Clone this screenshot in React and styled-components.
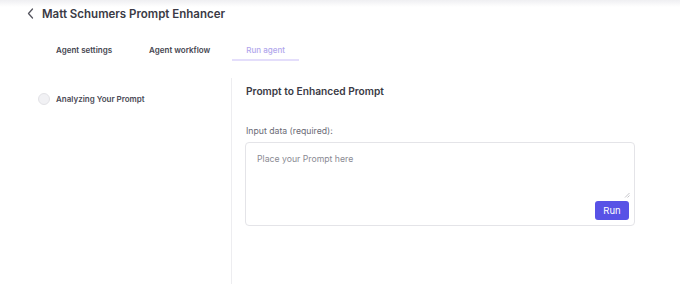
import React from 'react';
import styled, { createGlobalStyle } from 'styled-components';

const GlobalStyle = createGlobalStyle`
   html, body {
      margin: 0;
      padding: 0;
      background: #fff;
   }
   body {
      font-family: Inter, "Noto Sans", sans-serif;
      color: #3a3a45;
   }
`;

const Page = styled.div`
   position: relative;
   width: 680px;
   height: 284px;
   overflow: hidden;
   display: flex;
   flex-direction: column;
   background: #fff;

   &::before {
      content: '';
      position: absolute;
      top: 0;
      left: 0;
      right: 0;
      height: 7px;
      background: linear-gradient(#efeff2, rgba(255, 255, 255, 0));
   }
`;

const Header = styled.div`
   display: flex;
   align-items: center;
   gap: 8px;
   padding: 4px 0 0 27px;
   height: 19px;
`;

const BackButton = styled.button`
   border: none;
   background: none;
   padding: 0;
   display: flex;
   color: #55555f;
   cursor: pointer;
`;

const Title = styled.h1`
   margin: 0;
   font-size: 11.5px;
   font-weight: 600;
   color: #3a3a45;
`;

const Tabs = styled.div`
   display: flex;
   padding: 17px 0 0 42px;
`;

const Tab = styled.div`
   padding: 5px 14px 0;
   height: 14px;
   line-height: 10px;
   font-size: 8px;
   white-space: nowrap;
   margin-right: ${(p) => p.gap || 0}px;
   color: ${(p) => (p.active ? '#b1a6ec' : '#45454f')};
   font-weight: ${(p) => (p.active ? 500 : 600)};
   border-bottom: 2px solid ${(p) => (p.active ? '#e4defb' : 'transparent')};
`;

const Body = styled.div`
   flex: 1;
   display: flex;
   margin-top: 17px;
`;

const Sidebar = styled.div`
   width: 232px;
   border-right: 1px solid #ededf0;
   box-sizing: border-box;
   padding: 15px 0 0 38px;
`;

const Step = styled.div`
   display: flex;
   align-items: center;
   gap: 6px;
`;

const StepDot = styled.span`
   width: 10px;
   height: 10px;
   border-radius: 50%;
   background: #f1f1f4;
   border: 1px solid #e2e2e6;
`;

const StepLabel = styled.span`
   font-size: 8px;
   font-weight: 600;
   color: #4a4a55;
`;

const Main = styled.div`
   flex: 1;
   padding: 6px 45px 0 13px;
`;

const SectionTitle = styled.h2`
   margin: 0 0 0 1px;
   font-size: 10.2px;
   font-weight: 600;
   color: #3a3a45;
   height: 14px;
   line-height: 14px;
`;

const FieldLabel = styled.div`
   margin: 27px 0 0 1px;
   font-size: 8.7px;
   color: #6a6a75;
   line-height: 12px;
`;

const InputBox = styled.div`
   margin-top: 5px;
   height: 84px;
   border: 1px solid #e4e4e8;
   border-radius: 4px;
   box-sizing: border-box;
   display: flex;
   flex-direction: column;
   padding: 10px 5px 5px 11px;
   position: relative;
`;

const PromptArea = styled.textarea`
   flex: 1;
   border: none;
   outline: none;
   resize: none;
   padding: 0;
   font-family: inherit;
   font-size: 8.7px;
   color: #3a3a45;
   line-height: 12px;
   background: transparent;

   &::placeholder {
      color: #8a8a93;
   }
`;

const ResizeGrip = styled.svg`
   position: absolute;
   right: 4px;
   bottom: 27px;
`;

const Actions = styled.div`
   display: flex;
   justify-content: flex-end;
`;

const RunButton = styled.button`
   background: #5852e6;
   color: #fff;
   border: none;
   border-radius: 3px;
   font-family: inherit;
   font-size: 9.5px;
   width: 34px;
   height: 19px;
   padding: 0;
   cursor: pointer;
`;

const App = () => {
   return (
      <>
         <GlobalStyle />
         <Page>
            <Header>
               <BackButton aria-label="Back">
                  <svg width="7" height="11" viewBox="0 0 7 11" fill="none">
                     <path
                        d="M5.5 1L1.5 5.5L5.5 10"
                        stroke="currentColor"
                        strokeWidth="1.3"
                        strokeLinecap="round"
                        strokeLinejoin="round"
                     />
                  </svg>
               </BackButton>
               <Title>Matt Schumers Prompt Enhancer</Title>
            </Header>

            <Tabs>
               <Tab gap={9}>Agent settings</Tab>
               <Tab gap={8}>Agent workflow</Tab>
               <Tab active>Run agent</Tab>
            </Tabs>

            <Body>
               <Sidebar>
                  <Step>
                     <StepDot />
                     <StepLabel>Analyzing Your Prompt</StepLabel>
                  </Step>
               </Sidebar>

               <Main>
                  <SectionTitle>Prompt to Enhanced Prompt</SectionTitle>
                  <FieldLabel>Input data (required):</FieldLabel>
                  <InputBox>
                     <PromptArea placeholder="Place your Prompt here" />
                     <ResizeGrip width="6" height="6" viewBox="0 0 6 6">
                        <path d="M1 5.5L5.5 1M3.5 5.5L5.5 3.5" stroke="#b5b5bb" strokeWidth="0.8" />
                     </ResizeGrip>
                     <Actions>
                        <RunButton>Run</RunButton>
                     </Actions>
                  </InputBox>
               </Main>
            </Body>
         </Page>
      </>
   );
};

export default App;
